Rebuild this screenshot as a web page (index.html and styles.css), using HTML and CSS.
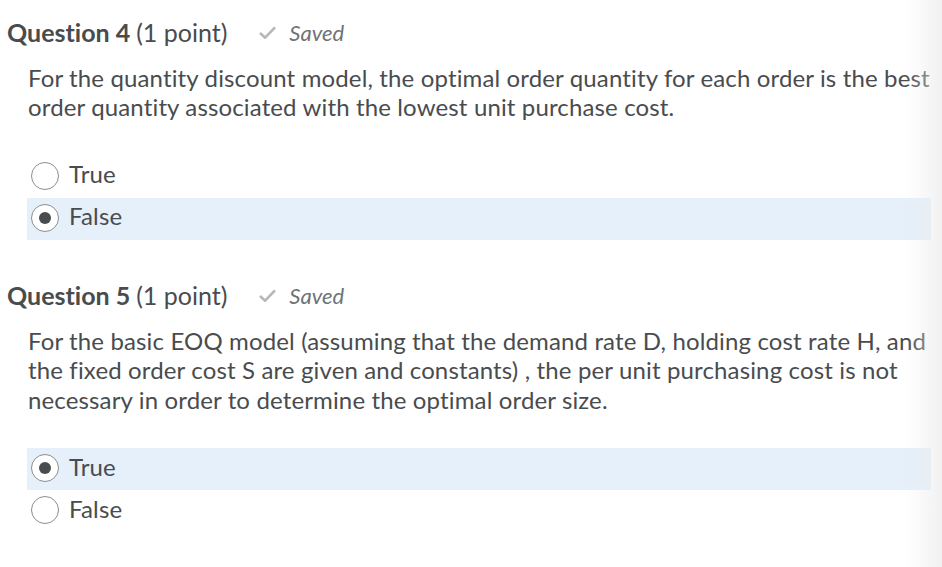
FILE: index.html
```html
<!DOCTYPE html>
<html>
<head>
<meta charset="utf-8">
<link rel="stylesheet" href="styles.css">
</head>
<body>
<div class="page">
  <section class="question">
    <h2 class="q-head"><span class="q-title">Question 4</span> <span class="q-points">(1 point)</span>
      <span class="saved"><svg class="check" viewBox="0 0 20 16" width="19" height="15"><path d="M2 8.5 L7.5 13.5 L18 2.5" fill="none" stroke="#b5b8ba" stroke-width="2.8" stroke-linejoin="round"/></svg><em>Saved</em></span>
    </h2>
    <div class="q-body">
      <p class="q-text">For the quantity discount model, the optimal order quantity for each order is the best order quantity associated with the lowest unit purchase cost.</p>
      <div class="options">
        <label class="option"><span class="radio"></span><span class="opt-label">True</span></label>
        <label class="option selected"><span class="radio checked"></span><span class="opt-label">False</span></label>
      </div>
    </div>
  </section>
  <section class="question">
    <h2 class="q-head"><span class="q-title">Question 5</span> <span class="q-points">(1 point)</span>
      <span class="saved"><svg class="check" viewBox="0 0 20 16" width="19" height="15"><path d="M2 8.5 L7.5 13.5 L18 2.5" fill="none" stroke="#b5b8ba" stroke-width="2.8" stroke-linejoin="round"/></svg><em>Saved</em></span>
    </h2>
    <div class="q-body">
      <p class="q-text">For the basic EOQ model (assuming that the demand rate D, holding cost rate H, and the fixed order cost S are given and constants) , the per unit purchasing cost is not necessary in order to determine the optimal order size.</p>
      <div class="options">
        <label class="option selected"><span class="radio checked"></span><span class="opt-label">True</span></label>
        <label class="option"><span class="radio"></span><span class="opt-label">False</span></label>
      </div>
    </div>
  </section>
  <div class="edge-shade"></div>
</div>
</body>
</html>
```
FILE: styles.css
```css
html, body {
  margin: 0;
  padding: 0;
  background: #fff;
}
body {
  font-family: Lato, "Open Sans", sans-serif;
  font-variant-ligatures: none;
  color: #494c4e;
  width: 942px;
  height: 567px;
  overflow: hidden;
}
.page {
  position: relative;
  height: 567px;
  padding: 18px 11px 0 7px;
  box-sizing: border-box;
}
.question {
  margin-bottom: 41px;
}
.q-head {
  margin: 0;
  font-size: 25px;
  line-height: 29px;
  font-weight: normal;
  display: flex;
  align-items: center;
  gap: 6px;
}
.q-title {
  font-weight: bold;
}
.saved {
  display: inline-flex;
  align-items: center;
  gap: 12px;
  margin-left: 25px;
  font-size: 22px;
  color: #6e7376;
}
.saved em {
  font-style: italic;
}
.check {
  display: block;
}
.q-body {
  padding-left: 20px;
}
.q-text {
  margin: 16px 0 34px 1px;
  font-size: 24px;
  line-height: 29.4px;
  letter-spacing: 0.14px;
}
.options {
  display: flex;
  flex-direction: column;
}
.option {
  display: flex;
  align-items: center;
  height: 42px;
  padding-left: 4px;
  gap: 10px;
  font-size: 24px;
  letter-spacing: 0.14px;
}
.opt-label {
  position: relative;
  top: -3px;
}
.option.selected {
  background: #e6f0fa;
}
.radio {
  width: 28px;
  height: 28px;
  box-sizing: border-box;
  border: 1px solid #8a8d90;
  border-radius: 50%;
  background: #fff;
  display: flex;
  align-items: center;
  justify-content: center;
  position: relative;
  top: -1px;
}
.radio.checked::after {
  content: "";
  width: 12px;
  height: 12px;
  border-radius: 50%;
  background: #494c4e;
}
.edge-shade {
  position: absolute;
  top: 0;
  right: 0;
  width: 36px;
  height: 100%;
  background: linear-gradient(to right, rgba(235,235,235,0), rgba(235,235,235,0.7));
  pointer-events: none;
}
```
